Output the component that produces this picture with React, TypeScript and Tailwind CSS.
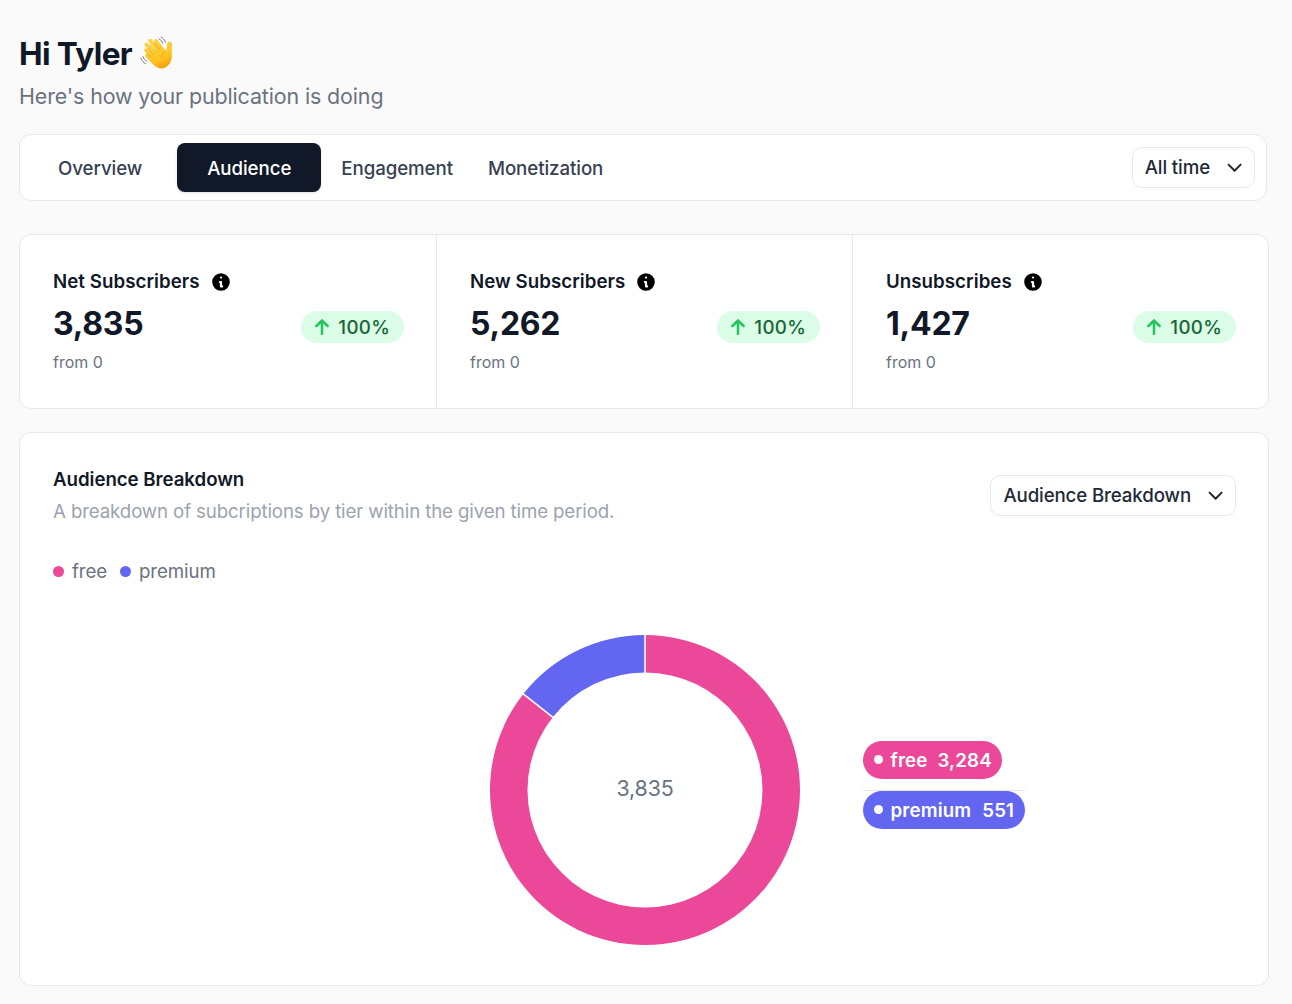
import { useState } from "react";
import clsx from "clsx";

const TABS = ["Overview", "Audience", "Engagement", "Monetization"];

const STATS = [
  { label: "Net Subscribers", value: "3,835", previous: "0", change: "100%" },
  { label: "New Subscribers", value: "5,262", previous: "0", change: "100%" },
  { label: "Unsubscribes", value: "1,427", previous: "0", change: "100%" },
];

const TIERS = [
  { name: "free", value: 3284, color: "#ec4899", dot: "bg-[#ec4899]" },
  { name: "premium", value: 551, color: "#6366f1", dot: "bg-[#6366f1]" },
];

const TOTAL = TIERS.reduce((sum, tier) => sum + tier.value, 0);

function WavingHand() {
  return (
    <svg viewBox="0 0 36 36" className="w-[34px] h-[34px] mb-0.5 shrink-0" role="img" aria-label="Waving hand">
      <defs>
        <linearGradient id="hand" gradientUnits="userSpaceOnUse" x1="10" y1="4" x2="26" y2="35">
          <stop offset="0" stopColor="#ffd23c" />
          <stop offset="0.65" stopColor="#ffc423" />
          <stop offset="1" stopColor="#f29a00" />
        </linearGradient>
      </defs>
      <g stroke="url(#hand)" strokeLinecap="round" fill="none">
        <path d="M6.4 15L15 24" strokeWidth="3.9" />
        <path d="M6.6 9L18 21" strokeWidth="4" />
        <path d="M10.8 5L22 18" strokeWidth="4" />
        <path d="M16.8 5.4L25 16" strokeWidth="4" />
      </g>
      <path
        d="M9.5 18.5L23.5 12.5L26.8 16.2C28.2 14.6 28.4 12.2 28.8 9.2C29 7 30.4 5.9 32 6.3C34 6.8 34.1 8.8 33.8 11C33.4 14.4 33.9 17.4 33.8 21C33.7 27 30 33.2 24 34.3C19.5 35 16 32.4 13 29.2L6.4 22.4C4.4 20.2 6.6 17.4 9.5 18.5Z"
        fill="url(#hand)"
      />
      <g fill="none" stroke="#e39a16" strokeWidth="0.8" strokeLinecap="round">
        <path d="M8.2 13.4L14.2 19.6M10.6 9.6L17.4 17M15.2 7.6L21 14.4M8.8 19.4L12 22.6" />
        <path d="M26.8 16.2C24 18.2 22.9 20.2 23.1 22.8" />
      </g>
      <g fill="none" stroke="#6b7280" strokeWidth="1" strokeLinecap="round">
        <path d="M20.2 3.2C22 4 23.5 5.8 24.2 7.6M22.3 1.2C24.4 2.2 26.2 4.3 27 6.5" />
        <path d="M3.2 21.8C3.8 24 5.3 25.8 7.1 26.8M1 23.4C1.8 26.1 3.6 28.2 5.9 29.4" />
      </g>
    </svg>
  );
}

function InfoIcon() {
  return (
    <svg viewBox="0 0 20 20" fill="black" className="w-[22px] h-[22px] mt-px">
      <path
        fillRule="evenodd"
        clipRule="evenodd"
        d="M18 10a8 8 0 11-16 0 8 8 0 0116 0zm-7-4a1 1 0 11-2 0 1 1 0 012 0zM9 9a1 1 0 000 2v3a1 1 0 001 1h1a1 1 0 100-2v-3a1 1 0 00-1-1H9z"
      />
    </svg>
  );
}

function ArrowUpIcon() {
  return (
    <svg viewBox="0 0 14 16" fill="none" className="w-3.5 h-4">
      <path d="M7 14.8V1.8M1.4 7L7 1.5L12.6 7" stroke="#22c55e" strokeWidth="2.5" strokeLinecap="round" strokeLinejoin="round" />
    </svg>
  );
}

function SelectButton({ label }: { label: string }) {
  return (
    <button className="flex items-center h-[41px] pl-3 pr-[11px] gap-[17px] rounded-[10px] border border-gray-200 bg-white text-[18.7px] leading-7 tracking-[-0.13px] font-medium text-[#1f2937]">
      <span className="pt-px">{label}</span>
      <svg viewBox="0 0 16 10" fill="none" className="w-4 h-2.5">
        <path d="M1.6 1.6L7.6 7.8L13.6 1.6" stroke="#1f2937" strokeWidth="2" strokeLinecap="round" strokeLinejoin="round" />
      </svg>
    </button>
  );
}

// Point on a circle of the given radius, angle measured clockwise from the top
const point = (radius: number, angle: number) =>
  `${155 + radius * Math.sin(angle)} ${155 - radius * Math.cos(angle)}`;

function Donut() {
  const outer = 155;
  const inner = 117.5;
  let start = 0;

  return (
    <svg viewBox="0 0 310 310" className="w-[310px] h-[310px] overflow-visible">
      {TIERS.map((tier) => {
        const end = start + (tier.value / TOTAL) * Math.PI * 2;
        const large = end - start > Math.PI ? 1 : 0;
        const d = `M${point(outer, start)}A${outer} ${outer} 0 ${large} 1 ${point(outer, end)}L${point(inner, end)}A${inner} ${inner} 0 ${large} 0 ${point(inner, start)}Z`;
        start = end;
        return <path key={tier.name} d={d} fill={tier.color} />;
      })}
      <path
        d={`M155 0V38M${point(156, (TIERS[0].value / TOTAL) * Math.PI * 2)}L${point(116, (TIERS[0].value / TOTAL) * Math.PI * 2)}`}
        stroke="white"
        strokeWidth="1.5"
      />
      <text x="155" y="161" textAnchor="middle" fontSize="21.4" letterSpacing="-0.15" fill="#6b7280">
        {TOTAL.toLocaleString("en-US")}
      </text>
    </svg>
  );
}

export default function App() {
  const [activeTab, setActiveTab] = useState("Audience");

  return (
    <div className="w-[1292px] h-[1004px] overflow-hidden bg-[#fafafa] pl-[19px] pt-[34px] font-['Inter',sans-serif]">
      <h1 className="flex items-center gap-2 h-10 text-[31.6px] font-bold tracking-[-0.02em] text-[#111827]">
        <span>Hi Tyler</span>
        <WavingHand />
      </h1>
      <p className="mt-[6px] text-[21.4px] leading-[32px] tracking-[-0.11px] text-[#6b7280]">
        Here's how your publication is doing
      </p>

      {/* Tab bar */}
      <div className="mt-[22px] flex items-center justify-between w-[1248px] h-[67px] pl-[7px] pr-[11px] rounded-xl border border-gray-200 bg-white">
        <nav className="flex items-center">
          {TABS.map((tab) => (
            <button
              key={tab}
              onClick={() => setActiveTab(tab)}
              className={clsx(
                "h-[49px] pt-0.5 text-[18.7px] leading-7 tracking-[-0.08px] font-medium",
                tab === activeTab
                  ? "px-[30px] mr-[3px] rounded-lg bg-[#111827] text-white shadow-sm"
                  : "text-[#374151]",
                tab === "Overview" && "px-[31px] mr-[4px]",
                tab === "Engagement" && "px-[17px]",
                tab === "Monetization" && "px-[18px]"
              )}
            >
              {tab}
            </button>
          ))}
        </nav>
        <SelectButton label="All time" />
      </div>

      {/* Stats */}
      <div className="mt-[33px] grid grid-cols-3 w-[1250px] h-[175px] rounded-xl border border-gray-200 bg-white">
        {STATS.map((stat, i) => (
          <div key={stat.label} className={clsx("pl-[33px] pr-8 pt-8", i > 0 && "border-l border-gray-200")}>
            <div className="flex items-center gap-2.5 h-[28px] text-[18.7px] leading-7 tracking-[0.05px] font-semibold text-[#111827]">
              <span className="pt-px">{stat.label}</span>
              <InfoIcon />
            </div>
            <div className="flex items-start justify-between">
              <div>
                <p className="mt-[9px] text-[32px] leading-10 tracking-[-0.25px] font-bold text-[#111827]">{stat.value}</p>
                <p className="mt-[6px] text-[16px] leading-6 text-[#6b7280]">from {stat.previous}</p>
              </div>
              <span className="mt-4 flex items-center gap-[9px] h-8 px-3.5 rounded-full bg-green-100 text-[18.7px] leading-7 tracking-[0.3px] font-medium text-[#166534]">
                <ArrowUpIcon />
                <span className="pt-px">{stat.change}</span>
              </span>
            </div>
          </div>
        ))}
      </div>

      {/* Audience breakdown */}
      <section className="mt-[23px] w-[1250px] h-[554px] pl-[33px] pr-8 pt-[33px] rounded-xl border border-gray-200 bg-white">
        <div className="flex items-start justify-between">
          <div>
            <h2 className="text-[18.7px] leading-7 tracking-[-0.05px] font-semibold text-[#111827]">Audience Breakdown</h2>
            <p className="mt-1 text-[18.7px] leading-7 tracking-[-0.13px] text-[#9ca3af]">
              A breakdown of subcriptions by tier within the given time period.
            </p>
          </div>
          <div className="mt-[9px]">
            <SelectButton label="Audience Breakdown" />
          </div>
        </div>

        <div className="mt-8 flex items-center gap-[13px] h-7 text-[18.7px] leading-7 tracking-[-0.1px] text-[#6b7280]">
          {TIERS.map((tier) => (
            <span key={tier.name} className="flex items-center gap-2">
              <span className={clsx("w-[11px] h-[11px] mb-0.5 rounded-full", tier.dot)} />
              {tier.name}
            </span>
          ))}
        </div>

        <div className="mt-[49px] ml-[436.5px] flex items-start gap-[63.5px]">
          <Donut />
          <div className="mt-[106px] flex flex-col items-start text-[18.7px] leading-7 tracking-[0.15px] font-semibold text-white">
            <span className="flex items-center h-[38px] px-[10.5px] rounded-full bg-[#ec4899]">
              <span className="w-[9px] h-[9px] mb-px mr-2 rounded-full bg-white" />
              <span className="pt-0.5">free</span>
              <span className="pt-0.5 ml-2.5">{TIERS[0].value.toLocaleString("en-US")}</span>
            </span>
            <div className="mt-[11px] self-stretch h-px bg-gray-200" />
            <span className="flex items-center h-[38px] px-[10.5px] rounded-full bg-[#6366f1]">
              <span className="w-[9px] h-[9px] mb-px mr-2 rounded-full bg-white" />
              <span className="pt-0.5">premium</span>
              <span className="pt-0.5 ml-[11px]">{TIERS[1].value}</span>
            </span>
          </div>
        </div>
      </section>
    </div>
  );
}
